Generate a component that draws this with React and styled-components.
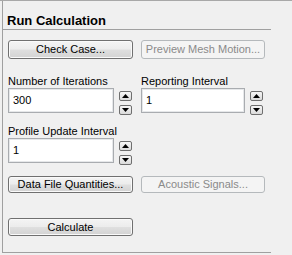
import React from "react";
import styled, { createGlobalStyle } from "styled-components";

const Global = createGlobalStyle`
  html, body { margin: 0; padding: 0; background: #f0f0f0; }
  body { font-family: "Liberation Sans", Arial, sans-serif; font-size: 11px; color: #000; }
  * { box-sizing: border-box; }
`;

const Frame = styled.div`
  width: 292px;
  height: 255px;
  border-top: 1px solid #a8a8a8;
  background: #f0f0f0;
`;

const Panel = styled.div`
  margin-left: 2px;
  width: 269px;
  height: 252px;
  border-left: 1px solid #a0a0a0;
  border-bottom: 1px solid #a0a0a0;
  display: flex;
  flex-direction: column;
`;

const Title = styled.div`
  height: 29px;
  border-bottom: 1px solid #a0a0a0;
  display: flex;
  align-items: flex-end;
  padding: 0 0 1px 4px;
  font-size: 13px;
  font-weight: bold;
  line-height: 15px;
`;

const Body = styled.div`
  padding: 10px 0 0 5px;
  display: flex;
  flex-direction: column;
`;

const Row = styled.div`
  display: grid;
  grid-template-columns: 125px 124px;
  column-gap: 8px;
  margin-top: ${(p) => p.$mt || 0}px;
`;

const Button = styled.button`
  height: ${(p) => p.$h || 18}px;
  padding: 0;
  font-family: inherit;
  font-size: 11px;
  line-height: 1;
  border-radius: 3px;
  border: 1px solid ${(p) => (p.disabled ? "#b5b9bc" : "#707070")};
  color: ${(p) => (p.disabled ? "#8a8a8a" : "#000")};
  background: ${(p) =>
    p.disabled
      ? "#f4f4f4"
      : "linear-gradient(#f4f4f4 0%, #ececec 48%, #dfdfdf 52%, #d3d3d3 100%)"};
  box-shadow: ${(p) => (p.disabled ? "none" : "inset 0 0 0 1px #fafafa")};
`;

const Fields = styled.div`
  margin-top: 16px;
  display: grid;
  grid-template-columns: 125px 124px;
  column-gap: 8px;
  row-gap: 10px;
`;

const Field = styled.div`
  display: flex;
  flex-direction: column;
`;

const Label = styled.div`
  height: 13px;
  line-height: 13px;
  font-size: 11px;
  white-space: nowrap;
`;

const InputRow = styled.div`
  display: flex;
  gap: 5px;
`;

const Input = styled.div`
  width: ${(p) => p.$w}px;
  height: 25px;
  background: #fff;
  border: 1px solid #a9acb0;
  box-shadow: inset 0 0 0 1px #e6e8ea;
  padding: 5px 0 0 4px;
  font-size: 11px;
  line-height: 13px;
`;

const Spinner = styled.div`
  display: flex;
  flex-direction: column;
  gap: 4px;
  padding-top: 3px;
`;

const SpinBtn = styled.div`
  width: 13px;
  height: 10px;
  border: 1px solid #6f6f6f;
  border-radius: 2px;
  background: linear-gradient(#f6f6f6, #dadada);
  display: flex;
  align-items: center;
  justify-content: center;
`;

const Up = () => (
  <svg width="7" height="4" viewBox="0 0 7 4">
    <polygon points="3.5,0 7,4 0,4" fill="#000" />
  </svg>
);
const Down = () => (
  <svg width="7" height="4" viewBox="0 0 7 4">
    <polygon points="0,0 7,0 3.5,4" fill="#000" />
  </svg>
);

const NumberField = ({ label, value, width }) => (
  <Field>
    <Label>{label}</Label>
    <InputRow>
      <Input $w={width}>{value}</Input>
      <Spinner>
        <SpinBtn><Up /></SpinBtn>
        <SpinBtn><Down /></SpinBtn>
      </Spinner>
    </InputRow>
  </Field>
);

export default function App() {
  return (
    <>
      <Global />
      <Frame>
        <Panel>
          <Title>Run Calculation</Title>
          <Body>
            <Row>
              <Button $h={19}>Check Case...</Button>
              <Button $h={19} disabled>Preview Mesh Motion...</Button>
            </Row>
            <Fields>
              <NumberField label="Number of Iterations" value="300" width={106} />
              <NumberField label="Reporting Interval" value="1" width={104} />
              <NumberField label="Profile Update Interval" value="1" width={106} />
            </Fields>
            <Row $mt={11}>
              <Button $h={17}>Data File Quantities...</Button>
              <Button $h={17} disabled>Acoustic Signals...</Button>
            </Row>
            <Row $mt={25}>
              <Button $h={18}>Calculate</Button>
            </Row>
          </Body>
        </Panel>
      </Frame>
    </>
  );
}
